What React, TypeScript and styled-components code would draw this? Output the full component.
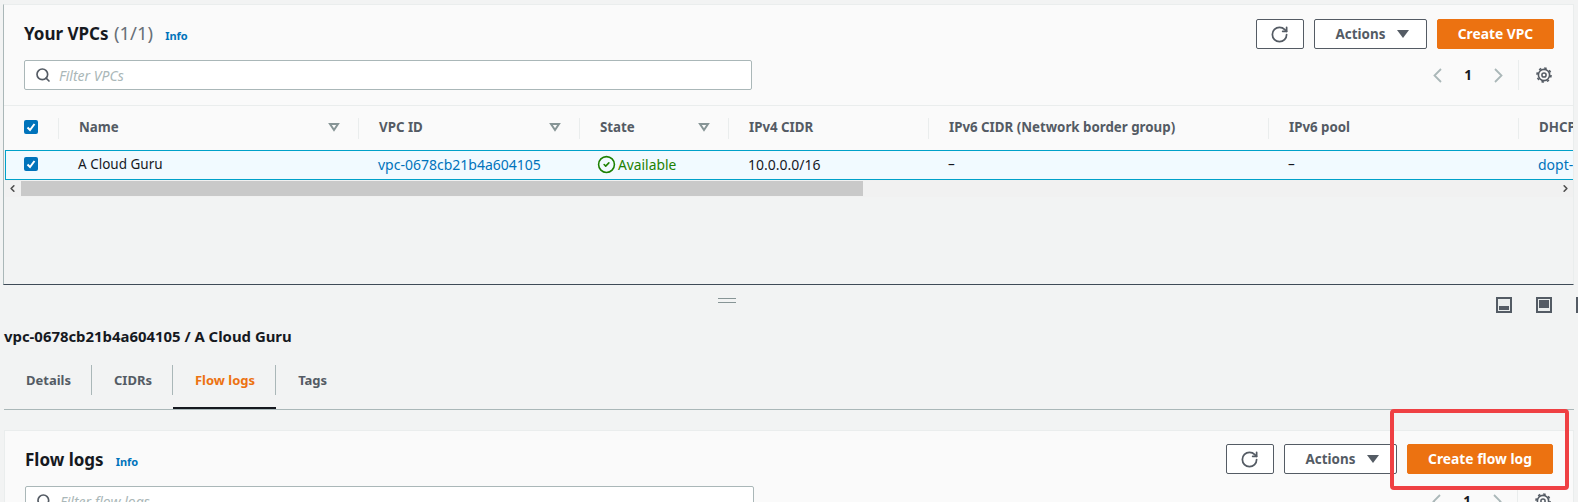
import React from "react";
import styled, { createGlobalStyle } from "styled-components";
import { ChevronLeft, ChevronRight, CircleCheck, RotateCw, Search } from "lucide-react";

const GlobalStyle = createGlobalStyle`
  html, body {
    margin: 0;
    padding: 0;
    background: #f2f3f3;
    font-family: "Noto Sans", "Open Sans", sans-serif;
    overflow: hidden;
  }
`;

const Page = styled.div`
  position: relative;
  width: 1578px;
  height: 502px;
  overflow: hidden;
  padding-top: 4px;
  box-sizing: border-box;
`;

const TopPanel = styled.section`
  width: 1571px;
  height: 281px;
  margin-left: 3px;
  box-sizing: border-box;
  border-left: 1px solid #aab7b8;
  border-top: 1px solid #eaeded;
  border-right: 1px solid #eaeded;
  border-bottom: 1px solid #3f4b57;
  overflow: hidden;
`;

const PanelHead = styled.div`
  background: #fafafa;
  border-bottom: 1px solid #eaeded;
  height: 101px;
  box-sizing: border-box;
  padding: 14px 19px 0 20px;
  display: flex;
  flex-direction: column;
  gap: 11px;
`;

const HeadRow = styled.div`
  display: flex;
  flex: none;
  height: 30px;
  align-items: center;
  justify-content: space-between;
`;

const TitleWrap = styled.div<{ $low?: boolean }>`
  display: flex;
  align-items: baseline;
  gap: 12px;
  padding: ${(p) => (p.$low ? "2px 0 0" : "0 0 2px")};
`;

const Title = styled.h2`
  margin: 0;
  font-size: 17px;
  line-height: 28px;
  font-weight: 700;
  color: #16191f;
  span {
    font-size: 18.5px;
    margin-left: 1px;
    font-weight: 400;
    color: #687078;
  }
`;

const InfoLink = styled.a`
  font-size: 11px;
  font-weight: 700;
  color: #0073bb;
`;

const Buttons = styled.div`
  display: flex;
  gap: 10px;
`;

const OutlineButton = styled.button<{ $width: number }>`
  width: ${(p) => p.$width}px;
  height: 30px;
  box-sizing: border-box;
  background: #fff;
  border: 1px solid #545b64;
  border-radius: 2px;
  color: #545b64;
  font: 700 13.4px "Noto Sans", sans-serif;
  display: flex;
  align-items: center;
  justify-content: center;
  gap: 12px;
  padding: 0;
`;

const ActionsButton = styled(OutlineButton)`
  padding: 0 0 1px 4px;
`;

const RefreshButton = styled(OutlineButton)`
  padding-right: 2px;
`;

const PrimaryButton = styled(OutlineButton)`
  background: #ec7211;
  border-color: #ec7211;
  color: #fff;
  font-size: 13.8px;
  padding-bottom: 1px;
`;

const Caret = styled.i`
  width: 0;
  height: 0;
  border-left: 6px solid transparent;
  border-right: 6px solid transparent;
  border-top: 8px solid #545b64;
`;

const FilterBox = styled.div<{ $width: number }>`
  width: ${(p) => p.$width}px;
  height: 30px;
  box-sizing: border-box;
  background: #fff;
  border: 1px solid #aab7b8;
  border-radius: 2px;
  display: flex;
  align-items: center;
  gap: 8px;
  padding-left: 10px;
  color: #aab7b8;
  font-size: 14px;
  font-style: italic;
  svg {
    color: #545b64;
  }
`;

const Pager = styled.div`
  display: flex;
  align-items: center;
  height: 30px;
  padding-right: 2px;
`;

const PageNumber = styled.b`
  font-size: 13.5px;
  color: #16191f;
  margin: 0 22px;
`;

const PagerDivider = styled.span`
  width: 1px;
  height: 30px;
  background: #eaeded;
  margin: 0 17px 0 15px;
`;

const TableClip = styled.div`
  overflow: hidden;
`;

const HeaderRow = styled.div`
  display: flex;
  height: 44px;
  background: #fafafa;
  align-items: center;
  width: 1700px;
`;

const DataRow = styled.div`
  display: flex;
  height: 30px;
  box-sizing: border-box;
  align-items: center;
  background: #f1faff;
  border: 1px solid #00a1c9;
  margin-left: 1px;
  width: 1700px;
`;

const Cell = styled.div<{ $width: number; $divider?: boolean }>`
  flex: none;
  width: ${(p) => p.$width}px;
  height: 21px;
  box-sizing: border-box;
  padding: 0 18px 2px 20px;
  display: flex;
  align-items: center;
  justify-content: space-between;
  font-size: 13.5px;
  color: #16191f;
  white-space: nowrap;
  border-right: ${(p) => (p.$divider ? "1px solid #eaeded" : "0")};
`;

const HeadCell = styled(Cell)`
  font-size: 13.3px;
  font-weight: 700;
  color: #545b64;
`;

const Link = styled.span`
  font-size: 14px;
  color: #0073bb;
`;

const Cidr = styled.span`
  font-size: 14px;
`;

const Status = styled.span`
  display: flex;
  align-items: center;
  gap: 2px;
  margin-left: -2px;
  font-size: 13.8px;
  color: #1d8102;
`;

const CheckBox = styled.span<{ $inset?: number }>`
  width: 14px;
  height: 14px;
  margin-left: ${(p) => p.$inset ?? 0}px;
  border-radius: 2px;
  background: #0073bb;
  display: flex;
  align-items: center;
  justify-content: center;
`;

const ScrollBar = styled.div`
  display: flex;
  align-items: center;
  justify-content: space-between;
  height: 17px;
  margin-left: 1px;
  background: #f1f1f1;
`;

const ScrollThumb = styled.div`
  width: 842px;
  height: 15px;
  background: #c9c9c9;
  margin-left: 16px;
`;

const ScrollArrow = styled.span<{ $side: string }>`
  position: absolute;
  ${(p) => p.$side}: 0;
  top: 0;
  width: 16px;
  height: 17px;
  display: flex;
  align-items: center;
  justify-content: center;
  color: #4f4f4f;
`;

const ScrollTrack = styled.div`
  position: relative;
`;

const DockBar = styled.div`
  position: relative;
  height: 39px;
  display: flex;
  justify-content: flex-end;
  align-items: flex-start;
  gap: 24px;
  padding-top: 12px;
  box-sizing: border-box;
  margin-right: -14px;
`;

const DragHandle = styled.span`
  position: absolute;
  left: 718px;
  top: 13px;
  width: 18px;
  height: 3px;
  border-top: 1px solid #879596;
  border-bottom: 1px solid #879596;
`;

const Detail = styled.h3`
  margin: 0 0 0 4px;
  font-size: 14.9px;
  line-height: 24px;
  font-weight: 700;
  color: #16191f;
`;

const Tabs = styled.nav`
  display: flex;
  align-items: flex-end;
  height: 46px;
  margin: 15px 0 0 4px;
  border-bottom: 1px solid #aab7b8;
  width: 1570px;
  box-sizing: content-box;
`;

const Tab = styled.div<{ $active?: boolean; $last?: boolean }>`
  position: relative;
  height: 46px;
  padding: 0 21px 12px 22px;
  display: flex;
  align-items: center;
  font-size: 13px;
  font-weight: 700;
  color: ${(p) => (p.$active ? "#ec7211" : "#545b64")};
  box-sizing: border-box;
  &::after {
    content: "";
    display: ${(p) => (p.$last ? "none" : "block")};
    position: absolute;
    right: 0;
    top: 2px;
    height: 30px;
    width: 1px;
    background: #aab7b8;
  }
  ${(p) =>
    p.$active
      ? `&::before {
          content: "";
          position: absolute;
          left: 0;
          right: 0;
          bottom: 0;
          height: 2px;
          background: #16191f;
        }`
      : ""}
`;

const BottomPanel = styled.section`
  margin: 20px 0 0 4px;
  width: 1570px;
  height: 80px;
  box-sizing: border-box;
  background: #fafafa;
  border-left: 1px solid #eaeded;
  border-top: 1px solid #eaeded;
  border-right: 1px solid #eaeded;
  padding: 13px 20px 0 20px;
  display: flex;
  flex-direction: column;
  gap: 12px;
`;

const Annotation = styled.div`
  position: absolute;
  left: 1390px;
  top: 409px;
  width: 179px;
  height: 81px;
  box-sizing: border-box;
  border: 4px solid #ef4043;
  border-radius: 4px;
`;

const SortIcon = () => (
  <svg width="12" height="10" viewBox="0 0 12 10">
    <path d="M2 2h8L6 8z" fill="none" stroke="#879596" strokeWidth="2" />
  </svg>
);

const CheckMark = ({ inset }: { inset?: number }) => (
  <CheckBox $inset={inset}>
    <svg width="12" height="12" viewBox="0 0 12 12">
      <path d="M2.5 6.5 5 9l4.5-6" fill="none" stroke="#fff" strokeWidth="2" />
    </svg>
  </CheckBox>
);

const DockIcon = ({ top }: { top?: boolean }) => (
  <svg width="16" height="16" viewBox="0 0 16 16">
    <rect x="0" y="0" width="16" height="16" fill="#545b64" />
    <rect x="2" y="2" width="12" height="12" fill="#eaeded" />
    <rect x="3" y={top ? 3 : 9} width="10" height={top ? 8 : 4} fill="#545b64" />
  </svg>
);

const PagerArrow = ({ left }: { left?: boolean }) => (
  <svg width="9" height="15" viewBox="0 0 9 15">
    <path
      d={left ? "M8 1 1.5 7.5 8 14" : "M1 1l6.5 6.5L1 14"}
      fill="none"
      stroke="#aab7b8"
      strokeWidth="1.8"
    />
  </svg>
);

const GearIcon = () => (
  <svg width="16" height="16" viewBox="0 0 16 16" fill="none" stroke="#545b64">
    <circle cx="8" cy="8" r="5.6" strokeWidth="1.6" />
    <circle cx="8" cy="8" r="7" strokeWidth="1.6" strokeDasharray="2.5 3" />
    <circle cx="8" cy="8" r="2.1" strokeWidth="1.5" />
  </svg>
);

const PagerBlock = () => (
  <Pager>
    <PagerArrow left />
    <PageNumber>1</PageNumber>
    <PagerArrow />
    <PagerDivider />
    <GearIcon />
  </Pager>
);

const columns = [
  { title: "Name", width: 300, sort: true },
  { title: "VPC ID", width: 221, sort: true },
  { title: "State", width: 149, sort: true },
  { title: "IPv4 CIDR", width: 200 },
  { title: "IPv6 CIDR (Network border group)", width: 340 },
  { title: "IPv6 pool", width: 250 },
  { title: "DHCP options set", width: 200 },
];

export default function App() {
  return (
    <Page>
      <GlobalStyle />
      <TopPanel>
        <PanelHead>
          <HeadRow>
            <TitleWrap>
              <Title>
                Your VPCs <span>(1/1)</span>
              </Title>
              <InfoLink>Info</InfoLink>
            </TitleWrap>
            <Buttons>
              <RefreshButton $width={48}>
                <RotateCw size={19} strokeWidth={2.2} />
              </RefreshButton>
              <ActionsButton $width={113}>
                Actions <Caret />
              </ActionsButton>
              <PrimaryButton $width={117}>Create VPC</PrimaryButton>
            </Buttons>
          </HeadRow>
          <HeadRow>
            <FilterBox $width={728}>
              <Search size={16} strokeWidth={2.5} />
              Filter VPCs
            </FilterBox>
            <PagerBlock />
          </HeadRow>
        </PanelHead>
        <TableClip>
          <HeaderRow>
            <Cell $width={55} $divider>
              <CheckMark />
            </Cell>
            {columns.map((c) => (
              <HeadCell key={c.title} $width={c.width} $divider>
                {c.title}
                {c.sort && <SortIcon />}
              </HeadCell>
            ))}
          </HeaderRow>
          <DataRow>
            <Cell $width={52}>
              <CheckMark inset={-2} />
            </Cell>
            <Cell $width={300}>A Cloud Guru</Cell>
            <Cell $width={221}>
              <Link>vpc-0678cb21b4a604105</Link>
            </Cell>
            <Cell $width={149}>
              <Status>
                <CircleCheck size={19} strokeWidth={2} />
                Available
              </Status>
            </Cell>
            <Cell $width={200}>
              <Cidr>10.0.0.0/16</Cidr>
            </Cell>
            <Cell $width={340}>–</Cell>
            <Cell $width={250}>–</Cell>
            <Cell $width={200}>
              <Link>dopt-0a1b2c</Link>
            </Cell>
          </DataRow>
          <ScrollTrack>
            <ScrollBar>
              <ScrollThumb />
            </ScrollBar>
            <ScrollArrow $side="left">
              <ChevronLeft size={11} strokeWidth={3.5} />
            </ScrollArrow>
            <ScrollArrow $side="right">
              <ChevronRight size={11} strokeWidth={3.5} />
            </ScrollArrow>
          </ScrollTrack>
        </TableClip>
      </TopPanel>
      <DockBar>
        <DragHandle />
        <DockIcon />
        <DockIcon top />
        <DockIcon />
      </DockBar>
      <Detail>vpc-0678cb21b4a604105 / A Cloud Guru</Detail>
      <Tabs>
        <Tab>Details</Tab>
        <Tab>CIDRs</Tab>
        <Tab $active>Flow logs</Tab>
        <Tab $last>Tags</Tab>
      </Tabs>
      <BottomPanel>
        <HeadRow>
          <TitleWrap $low>
            <Title>Flow logs</Title>
            <InfoLink>Info</InfoLink>
          </TitleWrap>
          <Buttons>
            <RefreshButton $width={48}>
              <RotateCw size={19} strokeWidth={2.2} />
            </RefreshButton>
            <ActionsButton $width={113}>
              Actions <Caret />
            </ActionsButton>
            <PrimaryButton $width={146}>Create flow log</PrimaryButton>
          </Buttons>
        </HeadRow>
        <HeadRow>
          <FilterBox $width={729}>
            <Search size={16} strokeWidth={2.5} />
            Filter flow logs
          </FilterBox>
          <PagerBlock />
        </HeadRow>
      </BottomPanel>
      <Annotation />
    </Page>
  );
}
